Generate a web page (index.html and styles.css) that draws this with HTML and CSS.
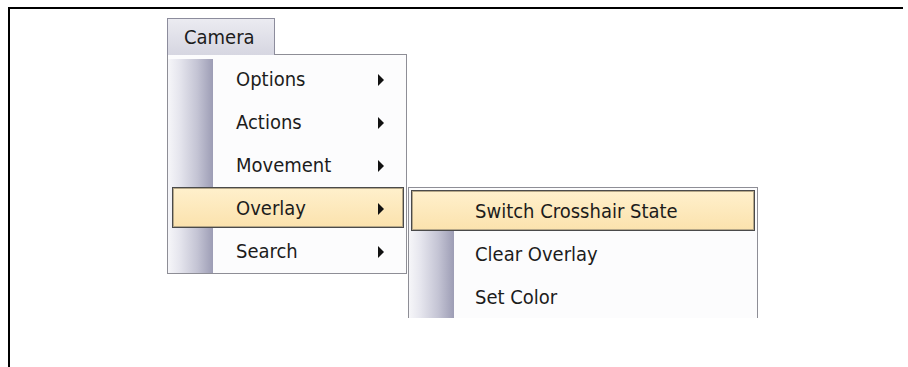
FILE: index.html
```html
<!DOCTYPE html>
<html>
<head>
<meta charset="utf-8">
<link rel="stylesheet" href="styles.css">
</head>
<body>
<div class="frame">
  <div class="menubar">
    <div class="tab">Camera</div>
    <div class="menu">
      <div class="row"><div class="item"><span class="label">Options</span><span class="arrow"></span></div></div>
      <div class="row"><div class="item"><span class="label">Actions</span><span class="arrow"></span></div></div>
      <div class="row"><div class="item"><span class="label">Movement</span><span class="arrow"></span></div></div>
      <div class="row open"><div class="item hot"><span class="label">Overlay</span><span class="arrow"></span></div>
        <div class="submenu">
          <div class="row"><div class="item hot"><span class="label">Switch Crosshair State</span></div></div>
          <div class="row"><div class="item"><span class="label">Clear Overlay</span></div></div>
          <div class="row"><div class="item"><span class="label">Set Color</span></div></div>
        </div>
      </div>
      <div class="row"><div class="item"><span class="label">Search</span><span class="arrow"></span></div></div>
    </div>
  </div>
</div>
</body>
</html>
```
FILE: styles.css
```css
html, body {
  margin: 0;
  padding: 0;
  background: #ffffff;
  overflow: hidden;
}
body {
  font-family: "DejaVu Sans Condensed", "DejaVu Sans", sans-serif;
  font-size: 20px;
  color: #1c1c1c;
}
.frame {
  box-sizing: border-box;
  margin: 7px 0 0 8px;
  width: 895px;
  height: 360px;
  border-top: 2px solid #000;
  border-left: 2px solid #000;
}
.menubar {
  padding: 9px 0 0 157px;
  display: flex;
  flex-direction: column;
  align-items: flex-start;
}
.tab {
  position: relative;
  z-index: 1;
  box-sizing: border-box;
  width: 108px;
  height: 37px;
  margin-bottom: -1px;
  padding-left: 16px;
  display: flex;
  align-items: center;
  border: 1px solid #8c8c9c;
  border-bottom: none;
  background: linear-gradient(to bottom, #ebebf1, #d6d6e1);
}
.menu {
  position: relative;
  box-sizing: border-box;
  width: 240px;
  padding: 2px 0 1px;
  border: 1px solid #8e8e96;
  background:
    linear-gradient(to right, #f6f6f9 0%, #e6e6ee 25%, #c4c4d4 65%, #9d9db5 100%) 0 4px / 45px calc(100% - 4px) no-repeat,
    #fcfcfd;
}
.row {
  position: relative;
  box-sizing: border-box;
  height: 43px;
  padding: 1px 2px 1px 4px;
}
.item {
  box-sizing: border-box;
  height: 41px;
  display: flex;
  align-items: center;
  padding: 0 19px 0 63px;
  border: 1px solid transparent;
}
.item .label {
  flex: 1;
  white-space: nowrap;
}
.item.hot {
  border-color: #4a4a4a;
  box-shadow: inset 0 0 0 1px #b5a788;
  background: linear-gradient(to bottom, #fff0cc, #fbe2ad);
}
.arrow {
  width: 0;
  height: 0;
  border-top: 6px solid transparent;
  border-bottom: 6px solid transparent;
  border-left: 6px solid #111;
  margin-top: 2px;
}
.submenu {
  position: absolute;
  z-index: 2;
  left: calc(100% + 2px);
  top: 1px;
  box-sizing: border-box;
  width: 350px;
  height: 131px;
  padding-top: 1px;
  border: 1px solid #8e8e96;
  border-bottom: none;
  overflow: hidden;
  background:
    linear-gradient(to right, #f6f6f9 0%, #e6e6ee 25%, #c4c4d4 65%, #9d9db5 100%) 0 4px / 45px calc(100% - 4px) no-repeat,
    #fcfcfd;
}
.submenu .row {
  padding: 1px 2px;
}
```
